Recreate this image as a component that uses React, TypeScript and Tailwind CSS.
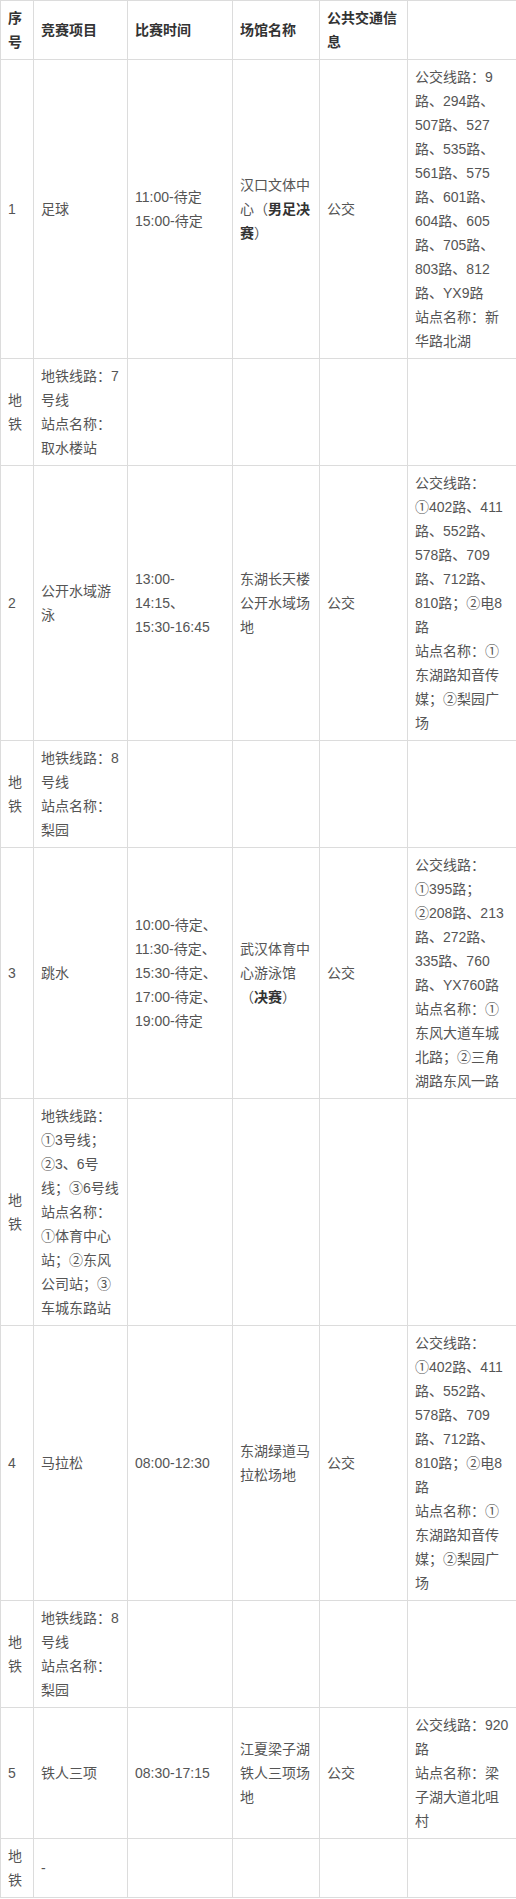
import type { ReactNode } from "react";

type Lines = ReactNode[];

type Row = {
  no: Lines;
  item: Lines;
  time?: Lines;
  venue?: Lines;
  kind?: Lines;
  info?: Lines;
};

const B = ({ children }: { children: ReactNode }) => (
  <b className="font-bold text-[#333]">{children}</b>
);

const headers: Lines[] = [
  ["序", "号"],
  ["竞赛项目"],
  ["比赛时间"],
  ["场馆名称"],
  ["公共交通信", "息"],
  [],
];

const subway = ["地", "铁"];

const bus402: Lines = [
  "公交线路：",
  "①402路、411",
  "路、552路、",
  "578路、709",
  "路、712路、",
  "810路；②电8",
  "路",
  "站点名称：①",
  "东湖路知音传",
  "媒；②梨园广",
  "场",
];

const line8: Lines = ["地铁线路：8", "号线", "站点名称：", "梨园"];

const rows: Row[] = [
  {
    no: ["1"],
    item: ["足球"],
    time: ["11:00-待定", "15:00-待定"],
    venue: [
      "汉口文体中",
      <>
        心（<B>男足决</B>
      </>,
      <>
        <B>赛</B>）
      </>,
    ],
    kind: ["公交"],
    info: [
      "公交线路：9",
      "路、294路、",
      "507路、527",
      "路、535路、",
      "561路、575",
      "路、601路、",
      "604路、605",
      "路、705路、",
      "803路、812",
      "路、YX9路",
      "站点名称：新",
      "华路北湖",
    ],
  },
  { no: subway, item: ["地铁线路：7", "号线", "站点名称：", "取水楼站"] },
  {
    no: ["2"],
    item: ["公开水域游", "泳"],
    time: ["13:00-", "14:15、", "15:30-16:45"],
    venue: ["东湖长天楼", "公开水域场", "地"],
    kind: ["公交"],
    info: bus402,
  },
  { no: subway, item: line8 },
  {
    no: ["3"],
    item: ["跳水"],
    time: ["10:00-待定、", "11:30-待定、", "15:30-待定、", "17:00-待定、", "19:00-待定"],
    venue: [
      "武汉体育中",
      "心游泳馆",
      <>
        （<B>决赛</B>）
      </>,
    ],
    kind: ["公交"],
    info: [
      "公交线路：",
      "①395路；",
      "②208路、213",
      "路、272路、",
      "335路、760",
      "路、YX760路",
      "站点名称：①",
      "东风大道车城",
      "北路；②三角",
      "湖路东风一路",
    ],
  },
  {
    no: subway,
    item: [
      "地铁线路：",
      "①3号线；",
      "②3、6号",
      "线；③6号线",
      "站点名称：",
      "①体育中心",
      "站；②东风",
      "公司站；③",
      "车城东路站",
    ],
  },
  {
    no: ["4"],
    item: ["马拉松"],
    time: ["08:00-12:30"],
    venue: ["东湖绿道马", "拉松场地"],
    kind: ["公交"],
    info: bus402,
  },
  { no: subway, item: line8 },
  {
    no: ["5"],
    item: ["铁人三项"],
    time: ["08:30-17:15"],
    venue: ["江夏梁子湖", "铁人三项场", "地"],
    kind: ["公交"],
    info: ["公交线路：920", "路", "站点名称：梁", "子湖大道北咀", "村"],
  },
  { no: subway, item: ["-"] },
];

const cell =
  "border border-[#dcdcdc] px-[7px] py-[5px] align-middle text-left whitespace-nowrap overflow-hidden";

function Cell({ lines = [], head }: { lines?: Lines; head?: boolean }) {
  const content = lines.map((l, i) => (
    <span key={i}>
      {i > 0 && <br />}
      {l}
    </span>
  ));
  return head ? (
    <th className={`${cell} font-bold text-[#333]`}>{content}</th>
  ) : (
    <td className={cell}>{content}</td>
  );
}

export default function App() {
  return (
    <div className="w-[516px] overflow-hidden bg-white">
      <table
        className="table-fixed border-collapse w-[522px] text-[14px] leading-[24px] text-[#555]"
        style={{ fontFamily: '"Liberation Sans", "Noto Sans CJK SC", sans-serif' }}
      >
        <colgroup>
          <col className="w-[33px]" />
          <col className="w-[94px]" />
          <col className="w-[105px]" />
          <col className="w-[87px]" />
          <col className="w-[88px]" />
          <col className="w-[115px]" />
        </colgroup>
        <thead>
          <tr>
            {headers.map((h, i) => (
              <Cell key={i} lines={h} head />
            ))}
          </tr>
        </thead>
        <tbody>
          {rows.map((r, i) => (
            <tr key={i}>
              <Cell lines={r.no} />
              <Cell lines={r.item} />
              <Cell lines={r.time} />
              <Cell lines={r.venue} />
              <Cell lines={r.kind} />
              <Cell lines={r.info} />
            </tr>
          ))}
        </tbody>
      </table>
    </div>
  );
}
